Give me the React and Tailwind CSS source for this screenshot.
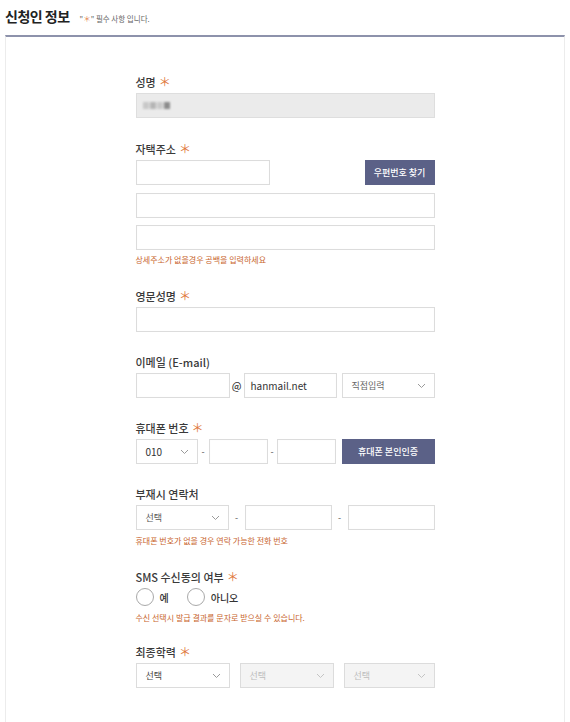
import React from "react";

const FONT = { fontFamily: '"Noto Sans CJK KR", "Noto Sans", sans-serif' };

function Star() {
  return <span className="ml-[3px] text-[12px] text-[#e0773a] font-normal">＊</span>;
}

function Label({ children, req }) {
  return (
    <div className="h-[14px] leading-[14px] text-[11px] font-medium text-[#3a3a3a] mb-[4px] flex items-center">
      {children}
      {req && <Star />}
    </div>
  );
}

function Chevron({ color = "#9a9a9a" }) {
  return (
    <svg width="9" height="6" viewBox="0 0 9 6" fill="none">
      <path d="M1 1l3.5 3.5L8 1" stroke={color} strokeWidth="1" />
    </svg>
  );
}

function Box({ className = "", children }) {
  return (
    <div className={"h-[25px] border border-[#dcdcdc] bg-white shadow-[inset_0_0_1px_rgba(0,0,0,0.05)] " + className}>
      {children}
    </div>
  );
}

function Select({ className = "", text, disabled, textClass = "" }) {
  return (
    <div
      className={
        "h-[25px] border border-[#dcdcdc] flex items-center justify-between pl-[9px] pr-[8px] " +
        (disabled ? "bg-[#f4f4f4] text-[#bdbdbd] " : "bg-white text-[#444] ") +
        className
      }
    >
      <span className={"text-[9px] " + textClass}>{text}</span>
      <Chevron color={disabled ? "#c4c4c4" : "#9a9a9a"} />
    </div>
  );
}

function Help({ children, mt }) {
  return <div className={"h-[10px] leading-[10px] text-[8px] text-[#c8642c] " + mt}>{children}</div>;
}

export default function App() {
  return (
    <div className="w-[570px] h-[722px] overflow-hidden bg-white" style={FONT}>
      <div className="flex items-end px-[5px] pt-[6px] h-[35px] pb-[9px]">
        <div className="text-[14px] tracking-[-0.5px] font-bold text-[#222] leading-[20px]">신청인 정보</div>
        <div className="ml-[10px] text-[7.5px] text-[#666] leading-[12px] mb-[1px]">
          "<span className="text-[#e0773a]">＊</span>" 필수 사항 입니다.
        </div>
      </div>
      <div className="mx-[5px] border-t-2 border-t-[#8d92ab] border-x border-x-[#ececec] h-[700px]">
        <div className="w-[299px] mx-auto pt-[38px]">
          <Label req>성명</Label>
          <div className="h-[25px] border border-[#dedede] bg-[#ebebeb] flex items-center pl-[6px]">
            <div className="flex gap-[1px] blur-[1.2px]">
              <span className="w-[6px] h-[7px] bg-[#c8c8c8]" />
              <span className="w-[6px] h-[7px] bg-[#b5b5b5]" />
              <span className="w-[6px] h-[7px] bg-[#c9c9c9]" />
              <span className="w-[6px] h-[7px] bg-[#8c8c8c]" />
            </div>
          </div>

          <div className="mt-[24px]">
            <Label req>자택주소</Label>
            <div className="flex justify-between">
              <Box className="w-[134px]" />
              <div className="w-[70px] h-[25px] bg-[#5b6187] text-white text-[9px] font-medium flex items-center justify-center">
                우편번호 찾기
              </div>
            </div>
            <Box className="mt-[8px]" />
            <Box className="mt-[7px]" />
            <Help mt="mt-[5px]">상세주소가 없을경우 공백을 입력하세요</Help>
          </div>

          <div className="mt-[24px]">
            <Label req>영문성명</Label>
            <Box />
          </div>

          <div className="mt-[23px]">
            <Label>이메일 (E-mail)</Label>
            <div className="flex items-center">
              <Box className="w-[94px]" />
              <div className="w-[14px] text-center text-[10px] text-[#333] font-medium">@</div>
              <Box className="w-[93px] flex items-center pl-[6px]">
                <span className="text-[10px] text-[#333]">hanmail.net</span>
              </Box>
              <Select className="w-[93px] ml-[5px]" text="직접입력" textClass="text-[#666]" />
            </div>
          </div>

          <div className="mt-[23px]">
            <Label req>휴대폰 번호</Label>
            <div className="flex items-center">
              <Select className="w-[62px] pl-[6px]" text="010" textClass="text-[10px] text-[#333]" />
              <div className="w-[11px] text-center text-[9px] text-[#555]">-</div>
              <Box className="w-[59px]" />
              <div className="w-[9px] text-center text-[9px] text-[#555]">-</div>
              <Box className="w-[59px]" />
              <div className="ml-[6px] w-[93px] h-[25px] bg-[#5b6187] text-white text-[9px] font-medium flex items-center justify-center">
                휴대폰 본인인증
              </div>
            </div>
          </div>

          <div className="mt-[23px]">
            <Label>부재시 연락처</Label>
            <div className="flex items-center">
              <Select className="w-[93px] pl-[6px]" text="선택" textClass="text-[#555]" />
              <div className="w-[16px] text-center text-[9px] text-[#555]">-</div>
              <Box className="w-[87px]" />
              <div className="w-[16px] text-center text-[9px] text-[#555]">-</div>
              <Box className="w-[87px]" />
            </div>
            <Help mt="mt-[6px]">휴대폰 번호가 없을 경우 연락 가능한 전화 번호</Help>
          </div>

          <div className="mt-[24px]">
            <Label req>SMS 수신동의 여부</Label>
            <div className="flex items-center h-[18px]">
              <div className="w-[18px] h-[18px] rounded-full border-[1.5px] border-[#a9a9a9] bg-white" />
              <span className="ml-[6px] text-[10px] text-[#333] font-medium">예</span>
              <div className="ml-[18px] w-[18px] h-[18px] rounded-full border-[1.5px] border-[#a9a9a9] bg-white" />
              <span className="ml-[6px] text-[10px] text-[#333] font-medium">아니오</span>
            </div>
            <Help mt="mt-[7px]">수신 선택시 발급 결과를 문자로 받으실 수 있습니다.</Help>
          </div>

          <div className="mt-[22px]">
            <Label req>최종학력</Label>
            <div className="flex items-center justify-between">
              <Select className="w-[94px] pl-[6px]" text="선택" textClass="text-[#444]" />
              <Select className="w-[94px] pl-[6px]" text="선택" disabled />
              <Select className="w-[91px] pl-[6px]" text="선택" disabled />
            </div>
          </div>
        </div>
      </div>
    </div>
  );
}
